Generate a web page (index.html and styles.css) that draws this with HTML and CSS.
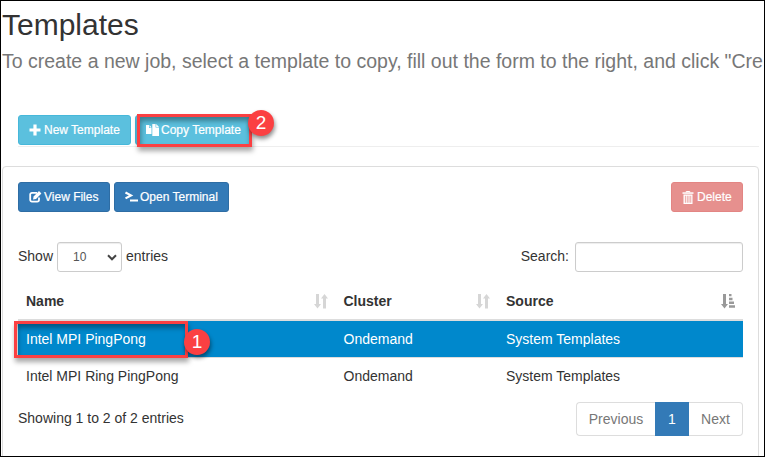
FILE: index.html
```html
<!DOCTYPE html>
<html lang="en">
<head>
<meta charset="utf-8">
<title>Templates</title>
<link rel="stylesheet" href="styles.css">
</head>
<body>
<main class="frame">
  <h1 class="title">Templates</h1>
  <p class="lead">To create a new job, select a template to copy, fill out the form to the right, and click "Cre</p>
  <div class="actions">
    <button class="btn info new"><svg width="12" height="12" viewBox="0 0 12 12"><path d="M4.4 0.5h3.2v3.9h3.9v3.2H7.6v3.9H4.4V7.6H.5V4.4h3.9z"/></svg><span>New Template</span></button>
    <button class="btn info copy"><svg width="13" height="12" viewBox="0 0 13 12"><path d="M0 1h3v3h2.500v6H0zM3.600 1l2 2.400h-2z"/><path d="M6.300 0h3.300v3.500H13V12H6.300zM10.200 0L13 2.900h-2.800z"/></svg><span>Copy Template</span></button>
  </div>
  <section class="panel">
    <div class="toolbar">
      <button class="btn primary view"><svg width="13" height="12" viewBox="0 0 13 12"><path d="M8 1.800H3A1.800 1.800 0 0 0 1.200 3.600v5.200A1.800 1.800 0 0 0 3 10.600h5.200A1.800 1.800 0 0 0 10 8.800V6.500" fill="none" stroke="currentColor" stroke-width="1.800"/><path d="M4 8.500l.6-3L10 .1l2.400 2.400L7 7.900z"/></svg><span>View Files</span></button>
      <button class="btn primary terminal"><svg width="13" height="12" viewBox="0 0 13 12"><path d="M.5 1.400L6 4.400.5 7.400M5 9.500h8" fill="none" stroke="currentColor" stroke-width="2.200"/></svg><span>Open Terminal</span></button>
      <button class="btn danger"><svg width="12" height="13" viewBox="0 0 12 13"><path d="M4.200 1.500V.5h3.600v1" fill="none" stroke="currentColor"/><path d="M.5 1.300h11v1.500H.5z"/><path d="M1.500 3.500h9V13h-9zM2.900 4.700v7h.8v-7zM4.800 4.700v7h.8v-7zM6.600 4.700v7h.8v-7zM8.400 4.700v7h.8v-7z" fill-rule="evenodd"/></svg><span>Delete</span></button>
    </div>
    <div class="filters">
      <span class="caption">Show</span>
      <div class="select"><span>10</span><svg width="10" height="7" viewBox="0 0 10 7"><path d="M1 1.300l4 4 4-4" fill="none" stroke="#444" stroke-width="2"/></svg></div>
      <span class="caption">entries</span>
      <label class="caption" for="search">Search:</label>
      <input id="search" type="text">
    </div>
    <div class="table">
      <div class="row head">
        <span>Name<svg class="sort" width="14" height="15" viewBox="0 0 14 15"><path d="M2 0h3v10h2L3.500 14.500 0 10h2zM9 14.500h3v-10h2L10.500 0 7 4.500h2z"/></svg></span>
        <span>Cluster<svg class="sort" width="14" height="15" viewBox="0 0 14 15"><path d="M2 0h3v10h2L3.500 14.500 0 10h2zM9 14.500h3v-10h2L10.500 0 7 4.500h2z"/></svg></span>
        <span>Source<svg class="sort active" width="14" height="15" viewBox="0 0 14 15"><path d="M2 0h3v10h2L3.500 14.500 0 10h2zM8 0h2.500v2.300H8zM8 3.700h3.500v2.500H8zM8 7.500h5V10H8zM8 11.300h6v2.500H8z"/></svg></span>
      </div>
      <div class="row selected"><span>Intel MPI PingPong</span><span>Ondemand</span><span>System Templates</span></div>
      <div class="row"><span>Intel MPI Ring PingPong</span><span>Ondemand</span><span>System Templates</span></div>
    </div>
    <div class="footer">
      <span class="summary">Showing 1 to 2 of 2 entries</span>
      <nav class="pages"><span class="prev">Previous</span><span class="current">1</span><span class="next">Next</span></nav>
    </div>
  </section>
  <div class="mark mark-copy"></div>
  <div class="mark mark-row"></div>
  <div class="badge badge-copy">2</div>
  <div class="badge badge-row">1</div>
</main>
</body>
</html>
```

FILE: styles.css
```css
* { box-sizing: border-box; }
body { margin: 0; background: #fff; }
.frame {
  position: relative;
  width: 765px;
  height: 457px;
  border: 1px solid #000;
  padding: 0 5px 0 1px;
  overflow: hidden;
  font: 14px/20px "Liberation Sans", Arial, sans-serif;
  color: #333;
}
.title { margin: 7px 0 0; font-size: 30px; line-height: 33px; font-weight: 400; }
.lead { margin: 9px 0 0; width: 761px; font-size: 19.500px; line-height: 22px; color: #777; white-space: nowrap; overflow: hidden; }
.actions {
  display: flex;
  gap: 4px;
  margin: 43px 0 0 16px;
  height: 32px;
  border-bottom: 1px solid #eee;
}
.btn {
  display: flex;
  align-items: center;
  gap: 3px;
  height: 30px;
  padding: 0 10px;
  border: 1px solid;
  border-radius: 3px;
  color: #fff;
  font: 12px/18px "Liberation Sans", Arial, sans-serif;
  -webkit-text-stroke: .2px;
  white-space: nowrap;
}
.btn svg { fill: currentColor; flex: none; }
.info { background: #5bc0de; border-color: #46b8da; }
.primary { background: #337ab7; border-color: #2e6da4; }
.danger { width: 72px; margin-left: auto; background: #e6908e; border-color: #e38583; }
.new { width: 113px; }
.copy { width: 117px; gap: 2px; }
.view { width: 92px; gap: 2px; }
.terminal { width: 115px; gap: 2px; }
.panel {
  width: 757px;
  height: 320px;
  margin-top: 19px;
  padding: 15px;
  border: 1px solid #ddd;
  border-radius: 4px;
}
.toolbar { display: flex; gap: 4px; }
.filters { display: flex; align-items: center; height: 30px; margin-top: 30px; }
.caption { padding-bottom: 2px; }
.select {
  display: flex;
  align-items: center;
  justify-content: space-between;
  width: 65px;
  height: 30px;
  margin: 0 4px;
  padding: 0 4px 0 15px;
  border: 1px solid #ccc;
  border-radius: 3px;
  box-shadow: inset 0 1px 1px rgba(0,0,0,.075);
  font-size: 12px;
  color: #555;
}
.filters label { margin-left: auto; }
.filters input {
  width: 168px;
  height: 30px;
  margin-left: 6px;
  border: 1px solid #ccc;
  border-radius: 3px;
  box-shadow: inset 0 1px 1px rgba(0,0,0,.075);
}
.table { margin-top: 10px; }
.row {
  display: grid;
  grid-template-columns: 317.500px 162.500px 245px;
  align-items: center;
  height: 37px;
  border-top: 1px solid #ddd;
}
.row > span { padding-left: 8px; }
.head { height: 39px; border-top: 0; border-bottom: 2px solid #ddd; font-weight: 700; }
.head > span { display: flex; align-items: center; justify-content: space-between; padding-right: 8px; }
.sort { fill: #d6d6d6; margin-top: 1px; }
.sort.active { fill: #999; }
.selected { height: 36px; border-top: 0; background: #08c; color: #fff; }
.footer { display: flex; justify-content: space-between; margin-top: 8px; }
.summary { padding-top: 6px; }
.pages { display: flex; height: 34px; color: #777; text-align: center; line-height: 32px; }
.pages span { border: 1px solid #ddd; }
.pages .prev { width: 79px; border-right: 0; border-radius: 4px 0 0 4px; }
.pages .current { width: 34px; background: #337ab7; border-color: #337ab7; color: #fff; }
.pages .next { width: 54px; border-left: 0; border-radius: 0 4px 4px 0; }
.mark {
  position: absolute;
  border: 3px solid #fb4042;
  box-shadow: 1px 4px 5px rgba(0,0,0,.35), inset 1px 4px 5px rgba(0,0,0,.35);
}
.mark-copy { left: 136px; top: 113px; width: 115px; height: 33px; }
.mark-row { left: 13px; top: 320px; width: 174px; height: 37px; }
.badge {
  position: absolute;
  width: 26px;
  height: 26px;
  border-radius: 50%;
  background: #fb4042;
  box-shadow: 1px 3px 4px rgba(0,0,0,.45);
  color: #fff;
  font-size: 19px;
  line-height: 26px;
  text-align: center;
}
.badge-copy { left: 247px; top: 109px; }
.badge-row { left: 183px; top: 328px; }
```
